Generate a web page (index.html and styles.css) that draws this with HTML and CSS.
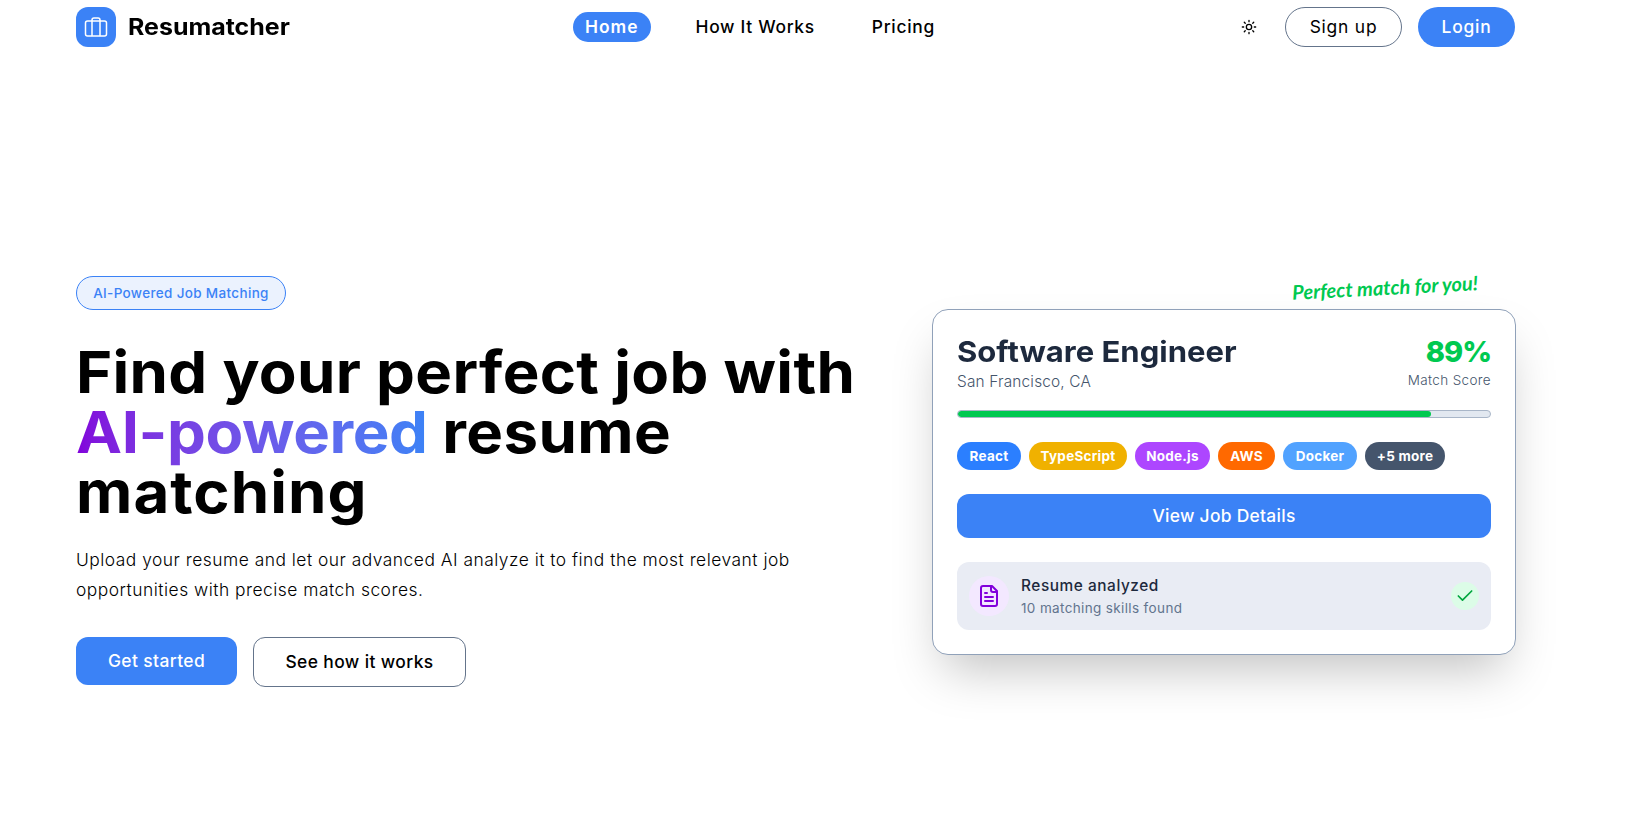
FILE: index.html
```html
<!DOCTYPE html>
<html lang="en">
<head>
<meta charset="utf-8">
<title>Resumatcher</title>
<link rel="stylesheet" href="styles.css">
</head>
<body>
<header class="header">
  <a class="brand">
    <span class="brand-mark"><svg class="icon" width="24" height="24" viewBox="0 0 24 24" stroke-width="1.5"><path d="M16 20.500V5a2 2 0 0 0-2-2h-4a2 2 0 0 0-2 2v15.500"/><rect x="1.500" y="6" width="21" height="15" rx="2"/></svg></span>
    <span class="brand-name">Resumatcher</span>
  </a>
  <nav class="nav">
    <a class="nav-link active">Home</a>
    <a class="nav-link">How It Works</a>
    <a class="nav-link">Pricing</a>
  </nav>
  <div class="actions">
    <svg class="icon sun" width="16" height="16" viewBox="0 0 24 24" stroke-width="2"><circle cx="12" cy="12" r="4"/><path d="M12 2v2M12 20v2M4.930 4.930l1.410 1.410M17.660 17.660l1.410 1.410M2 12h2M20 12h2M6.340 17.660l-1.410 1.410M19.070 4.930l-1.410 1.410"/></svg>
    <a class="pill signup">Sign up</a>
    <a class="pill login">Login</a>
  </div>
</header>
<main class="hero">
  <section class="intro">
    <div class="badge">AI-Powered Job Matching</div>
    <h1 class="headline"><span class="line-first">Find your perfect job with</span><br><span class="gradient">AI-powered</span> <span class="line-mid">resume</span><br><span class="line-last">matching</span></h1>
    <p class="lead">Upload your resume and let our advanced AI analyze it to find the most relevant job<br>opportunities with precise match scores.</p>
    <div class="cta">
      <a class="btn primary">Get started</a>
      <a class="btn outline">See how it works</a>
    </div>
  </section>
  <section class="card">
    <div class="note">Perfect match for you!</div>
    <div class="card-head">
      <div>
        <h2 class="job">Software Engineer</h2>
        <p class="place">San Francisco, CA</p>
      </div>
      <div class="score">
        <p class="percent">89%</p>
        <p class="score-label">Match Score</p>
      </div>
    </div>
    <div class="bar"><div class="bar-fill" style="width:89%"></div></div>
    <div class="tags">
      <span class="tag react">React</span>
      <span class="tag ts">TypeScript</span>
      <span class="tag node">Node.js</span>
      <span class="tag aws">AWS</span>
      <span class="tag docker">Docker</span>
      <span class="tag more">+5 more</span>
    </div>
    <a class="details">View Job Details</a>
    <div class="analysis">
      <span class="doc"><svg class="icon" width="24" height="24" viewBox="0 0 24 24" stroke-width="2"><path d="M15 2H6a2 2 0 0 0-2 2v16a2 2 0 0 0 2 2h12a2 2 0 0 0 2-2V7Z"/><path d="M14 2v4a2 2 0 0 0 2 2h4M10 9H8M16 13H8M16 17H8"/></svg></span>
      <div class="analysis-text">
        <p class="a-title">Resume analyzed</p>
        <p class="a-sub">10 matching skills found</p>
      </div>
      <span class="check"><svg class="icon" width="20" height="20" viewBox="0 0 24 24" stroke-width="2"><path d="M20 6 9 17l-5-5"/></svg></span>
    </div>
  </section>
</main>
</body>
</html>
```
FILE: styles.css
```css
* { box-sizing: border-box; }
body { margin: 0; background: #fff; color: #000; font-family: Inter, "Liberation Sans", sans-serif; height: 830px; overflow: hidden; white-space: nowrap; }
h1, h2, p { margin: 0; }
.icon { display: block; fill: none; stroke: currentColor; stroke-linecap: round; stroke-linejoin: round; }
.header { display: grid; grid-template-columns: 497px auto 1fr; align-items: center; height: 54px; padding: 0 122px 0 76px; }
.brand { display: flex; align-items: center; gap: 12px; }
.brand-mark { display: grid; place-items: center; width: 40px; height: 40px; border-radius: 12px; background: #3b82f6; color: #fff; }
.brand-name { font-size: 23px; font-weight: 700; transform: scaleX(1.085); transform-origin: left; }
.nav { display: flex; gap: 33px; font-size: 17.4px; font-weight: 500; letter-spacing: .7px; }
.nav-link { display: flex; align-items: center; height: 30px; padding: 0 12px 1px; border-radius: 15px; }
.active { background: #3b82f6; color: #fff; font-weight: 600; letter-spacing: 1px; }
.actions { display: flex; align-items: center; justify-content: flex-end; font-size: 17.4px; letter-spacing: .8px; }
.sun { margin-right: 28px; }
.pill { display: flex; align-items: center; justify-content: center; height: 40px; padding-bottom: 1px; border-radius: 20px; }
.signup { width: 117px; margin-right: 16px; border: 1px solid #64748b; }
.login { width: 97px; background: #3b82f6; color: #fff; font-weight: 500; }
.hero { display: flex; align-items: flex-start; justify-content: space-between; padding: 222px 121px 0 76px; }
.badge { display: inline-flex; align-items: center; justify-content: center; width: 210px; height: 34px; border: 1px solid #3b82f6; border-radius: 17px; background: #ebf2fe; color: #3b82f6; font-size: 13.5px; font-weight: 500; letter-spacing: .34px; }
.headline { margin-top: 32px; font-size: 58px; line-height: 60px; font-weight: 700; transform: scaleX(1.064); transform-origin: left; }
.line-first { letter-spacing: .3px; }
.line-mid { letter-spacing: .4px; }
.line-last { letter-spacing: 1px; }
.gradient { letter-spacing: -.4px; background: linear-gradient(to right in oklab, #8200db, #3b82f6); -webkit-background-clip: text; background-clip: text; color: transparent; }
.lead { margin-top: 23px; font-size: 17.4px; line-height: 30px; font-weight: 300; letter-spacing: .5px; }
.cta { display: flex; align-items: flex-start; gap: 16px; margin-top: 32px; font-size: 17.4px; font-weight: 500; letter-spacing: .4px; }
.btn { display: flex; align-items: center; justify-content: center; border-radius: 12px; padding-bottom: 1px; }
.primary { width: 161px; height: 48px; background: #3b82f6; color: #fff; }
.outline { width: 213px; height: 50px; border: 1px solid #64748b; }
.card { position: relative; width: 584px; height: 346px; margin-top: 33px; padding: 24px; border: 1px solid #90a1b9; border-radius: 16px; background: #fff; box-shadow: 0 25px 50px -12px rgba(0,0,0,.25); }
.note { position: absolute; right: 37px; top: -35px; transform: rotate(-3deg); color: #00c950; font-family: Lato, sans-serif; font-style: italic; font-weight: 700; font-size: 20px; }
.card-head { display: flex; justify-content: space-between; }
.job { color: #1d293d; font-size: 29px; line-height: 36px; font-weight: 700; transform: scaleX(1.07); transform-origin: left; }
.place { color: #45556c; font-size: 15.4px; line-height: 24px; font-weight: 300; letter-spacing: .18px; }
.score { text-align: right; }
.percent { color: #00c950; font-size: 29px; line-height: 36px; font-weight: 800; letter-spacing: -1px; }
.score-label { color: #45556c; font-size: 13.5px; line-height: 20px; font-weight: 350; letter-spacing: .35px; }
.bar { height: 8px; margin-top: 16px; border: 1px solid #a9b6c8; border-radius: 4px; background: #e2e8f0; overflow: hidden; }
.bar-fill { height: 100%; border-radius: 4px; background: #00c950; }
.tags { display: flex; gap: 8px; margin-top: 24px; }
.tag { display: grid; place-items: center; height: 28px; border-radius: 14px; color: #fff; font-size: 13.5px; font-weight: 700; letter-spacing: .25px; }
.react { width: 64px; background: #2b7fff; }
.ts { width: 98px; background: #f0b100; }
.node { width: 75px; background: #ad46ff; }
.aws { width: 57px; background: #ff6900; }
.docker { width: 74px; background: #51a2ff; }
.more { width: 80px; background: #45556c; }
.details { display: grid; place-items: center; height: 44px; margin-top: 24px; padding-bottom: 1px; border-radius: 12px; background: #3b82f6; color: #fff; font-size: 17.4px; font-weight: 500; letter-spacing: .3px; }
.analysis { display: flex; align-items: center; gap: 12px; height: 68px; margin-top: 24px; padding: 12px; border-radius: 12px; background: #e9ecf4; }
.doc { display: grid; place-items: center; width: 40px; height: 40px; border-radius: 50%; background: #f3e8ff; color: #8200db; }
.analysis-text { flex: 1; }
.a-title { color: #1d293d; font-size: 15.4px; line-height: 24px; font-weight: 450; letter-spacing: .55px; }
.a-sub { color: #62748e; font-size: 13.5px; line-height: 20px; letter-spacing: .36px; }
.check { display: grid; place-items: center; width: 28px; height: 28px; border-radius: 50%; background: #dcfce7; color: #00a63e; }
```
